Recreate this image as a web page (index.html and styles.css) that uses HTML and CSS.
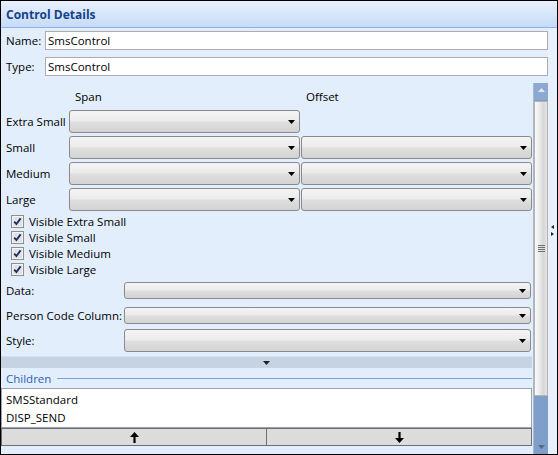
FILE: index.html
```html
<!DOCTYPE html>
<html>
<head>
<meta charset="utf-8">
<link rel="stylesheet" href="styles.css">
</head>
<body>
<div class="window">
  <div class="header"><span class="title">Control Details</span></div>
  <div class="body">
    <div class="panel">
      <div class="field-row first">
        <span class="field-label">Name:</span>
        <div class="textbox">SmsControl</div>
      </div>
      <div class="field-row">
        <span class="field-label">Type:</span>
        <div class="textbox">SmsControl</div>
      </div>
      <div class="main">
        <div class="content">
          <div class="span-head">
            <span></span>
            <span class="col-span">Span</span>
            <span class="col-offset">Offset</span>
          </div>
          <div class="span-grid">
            <span class="row-label">Extra Small</span>
            <div class="combo"><svg class="arrow" width="7" height="4" viewBox="0 0 7 4"><polygon points="0,0 7,0 3.5,4"/></svg></div>
            <span></span>
            <span class="row-label">Small</span>
            <div class="combo"><svg class="arrow" width="7" height="4" viewBox="0 0 7 4"><polygon points="0,0 7,0 3.5,4"/></svg></div>
            <div class="combo"><svg class="arrow" width="7" height="4" viewBox="0 0 7 4"><polygon points="0,0 7,0 3.5,4"/></svg></div>
            <span class="row-label">Medium</span>
            <div class="combo"><svg class="arrow" width="7" height="4" viewBox="0 0 7 4"><polygon points="0,0 7,0 3.5,4"/></svg></div>
            <div class="combo"><svg class="arrow" width="7" height="4" viewBox="0 0 7 4"><polygon points="0,0 7,0 3.5,4"/></svg></div>
            <span class="row-label">Large</span>
            <div class="combo"><svg class="arrow" width="7" height="4" viewBox="0 0 7 4"><polygon points="0,0 7,0 3.5,4"/></svg></div>
            <div class="combo"><svg class="arrow" width="7" height="4" viewBox="0 0 7 4"><polygon points="0,0 7,0 3.5,4"/></svg></div>
          </div>
          <div class="checks">
            <div class="check"><svg class="cb" width="13" height="13" viewBox="0 0 13 13"><rect x="0.5" y="0.5" width="12" height="12" fill="#f4f4f4" stroke="#8e8f8f"/><rect x="2" y="2" width="9" height="9" fill="#dfe3e8"/><path d="M3.2 6.6 L5.4 9 L9.6 3.4" fill="none" stroke="#1d2d5c" stroke-width="1.8"/></svg><span>Visible Extra Small</span></div>
            <div class="check"><svg class="cb" width="13" height="13" viewBox="0 0 13 13"><rect x="0.5" y="0.5" width="12" height="12" fill="#f4f4f4" stroke="#8e8f8f"/><rect x="2" y="2" width="9" height="9" fill="#dfe3e8"/><path d="M3.2 6.6 L5.4 9 L9.6 3.4" fill="none" stroke="#1d2d5c" stroke-width="1.8"/></svg><span>Visible Small</span></div>
            <div class="check"><svg class="cb" width="13" height="13" viewBox="0 0 13 13"><rect x="0.5" y="0.5" width="12" height="12" fill="#f4f4f4" stroke="#8e8f8f"/><rect x="2" y="2" width="9" height="9" fill="#dfe3e8"/><path d="M3.2 6.6 L5.4 9 L9.6 3.4" fill="none" stroke="#1d2d5c" stroke-width="1.8"/></svg><span>Visible Medium</span></div>
            <div class="check"><svg class="cb" width="13" height="13" viewBox="0 0 13 13"><rect x="0.5" y="0.5" width="12" height="12" fill="#f4f4f4" stroke="#8e8f8f"/><rect x="2" y="2" width="9" height="9" fill="#dfe3e8"/><path d="M3.2 6.6 L5.4 9 L9.6 3.4" fill="none" stroke="#1d2d5c" stroke-width="1.8"/></svg><span>Visible Large</span></div>
          </div>
          <div class="prop-row data">
            <span class="prop-label">Data:</span>
            <div class="combo"><svg class="arrow" width="7" height="4" viewBox="0 0 7 4"><polygon points="0,0 7,0 3.5,4"/></svg></div>
          </div>
          <div class="prop-row person">
            <span class="prop-label">Person Code Column:</span>
            <div class="combo"><svg class="arrow" width="7" height="4" viewBox="0 0 7 4"><polygon points="0,0 7,0 3.5,4"/></svg></div>
          </div>
          <div class="prop-row style">
            <span class="prop-label">Style:</span>
            <div class="combo"><svg class="arrow" width="7" height="4" viewBox="0 0 7 4"><polygon points="0,0 7,0 3.5,4"/></svg></div>
          </div>
          <div class="collapse"><svg width="7" height="4" viewBox="0 0 7 4"><polygon points="0,0 7,0 3.5,4" fill="#222"/></svg></div>
          <div class="group-head"><span class="group-title">Children</span><span class="group-line"></span></div>
          <div class="list">
            <div class="list-item">SMSStandard</div>
            <div class="list-item">DISP_SEND</div>
          </div>
          <div class="move-buttons">
            <div class="move-btn"><svg width="9" height="11" viewBox="0 0 9 11"><polygon points="4.5,0 9,5 5.6,5 5.6,11 3.4,11 3.4,5 0,5" fill="#000"/></svg></div>
            <div class="move-btn"><svg width="9" height="11" viewBox="0 0 9 11"><polygon points="4.5,11 9,6 5.6,6 5.6,0 3.4,0 3.4,6 0,6" fill="#000"/></svg></div>
          </div>
        </div>
        <div class="scrollbar">
          <div class="sb-up"><svg width="7" height="4" viewBox="0 0 7 4"><polygon points="0,4 7,4 3.5,0" fill="#dfe7f3"/></svg></div>
          <div class="sb-thumb"><span class="grip"></span><span class="grip"></span><span class="grip"></span><span class="grip"></span></div>
          <div class="sb-track"><svg width="7" height="4" viewBox="0 0 7 4"><polygon points="0,0 7,0 3.5,4" fill="#55698a"/></svg></div>
        </div>
      </div>
    </div>
    <div class="splitter">
      <svg width="5" height="12" viewBox="0 0 5 12"><polygon points="4,0 4,4 1,2" fill="#222"/><polygon points="1,7 1,11 4,9" fill="#222"/></svg>
    </div>
  </div>
</div>
</body>
</html>
```

FILE: styles.css
```css
* { box-sizing: border-box; }
html, body { margin: 0; padding: 0; }
body {
  font-family: "Open Sans", "Noto Sans", sans-serif;
  font-size: 11.5px;
  color: #000;
  background: #fff;
}
.window {
  width: 558px;
  height: 455px;
  border: 1px solid #000;
  background: #e3eefc;
  display: flex;
  flex-direction: column;
  overflow: hidden;
}
.header {
  height: 27px;
  flex: none;
  background: linear-gradient(#e8f1fc, #c6dbf7);
  border-bottom: 1px solid #8fb2e2;
  padding-left: 5px;
  display: flex;
  align-items: center;
}
.title {
  font-weight: bold;
  font-size: 12px;
  color: #15428b;
}
.body {
  flex: 1;
  display: flex;
  min-height: 0;
}
.panel {
  flex: 1;
  display: flex;
  flex-direction: column;
  min-width: 0;
}
.splitter {
  width: 9px;
  flex: none;
  background: #e8f0fc;
  display: flex;
  justify-content: center;
  align-items: flex-start;
  padding-top: 197px;
}
.field-row {
  display: flex;
  align-items: center;
  height: 19px;
  margin-top: 7px;
}
.field-row.first { margin-top: 3px; }
.field-label {
  width: 44px;
  padding-left: 5px;
  flex: none;
}
.textbox {
  flex: 1;
  height: 19px;
  background: #fff;
  border: 1px solid #abadb3;
  padding-left: 2px;
  line-height: 17px;
}
.main {
  flex: 1;
  display: flex;
  margin-top: 7px;
  min-height: 0;
}
.content {
  width: 531px;
  margin-right: 1px;
  display: flex;
  flex-direction: column;
}
.span-head {
  display: grid;
  grid-template-columns: 67px 231px 231px;
  column-gap: 1px;
  height: 27px;
  padding-top: 6px;
  line-height: 15px;
}
.col-span { padding-left: 6px; }
.col-offset { padding-left: 5px; }
.span-grid {
  display: grid;
  grid-template-columns: 67px 231px 231px;
  column-gap: 1px;
  row-gap: 3px;
  grid-auto-rows: 23px;
}
.row-label {
  padding-left: 5px;
  align-self: center;
}
.combo {
  border: 1px solid #8a8a8a;
  border-radius: 3px;
  background: linear-gradient(#f4f4f4 0%, #ececec 45%, #dedede 55%, #d3d3d3 100%);
  display: flex;
  align-items: center;
  justify-content: flex-end;
  padding-right: 4px;
}
.arrow { fill: #000; }
.checks {
  margin-top: 2px;
  padding-left: 10px;
}
.check {
  height: 16px;
  display: flex;
  align-items: center;
  gap: 5px;
}
.cb { flex: none; }
.prop-row {
  display: grid;
  grid-template-columns: 123px 407px;
}
.prop-label {
  padding-left: 5px;
  align-self: center;
}
.prop-row.data { height: 17px; margin-top: 5px; }
.prop-row.person { height: 17px; margin-top: 8px; }
.prop-row.style { height: 23px; margin-top: 5px; }
.collapse {
  margin-top: 4px;
  height: 12px;
  background: #c6d3e3;
  border-top: 1px solid #d3dfee;
  display: flex;
  justify-content: center;
  align-items: center;
}
.group-head {
  height: 20px;
  display: flex;
  align-items: center;
}
.group-title {
  padding-left: 5px;
  color: #2a64b5;
}
.group-line {
  flex: 1;
  height: 1px;
  background: #7ba4da;
  margin-left: 6px;
}
.list {
  height: 40px;
  background: #fff;
  border: 1px solid #9aa3ad;
  padding-top: 2px;
}
.list-item {
  line-height: 18px;
  padding-left: 4px;
}
.move-buttons {
  display: grid;
  grid-template-columns: 266px 265px;
  height: 18px;
}
.move-btn {
  background: #dcdcdc;
  border: 1px solid #6f6f6f;
  display: flex;
  justify-content: center;
  align-items: center;
}
.move-btn + .move-btn { border-left: none; }
.scrollbar {
  width: 15px;
  flex: none;
  display: flex;
  flex-direction: column;
  background: #7f9ec9;
  border-left: 1px solid #a7b8cf;
}
.sb-up {
  height: 17px;
  background: #8da9d2;
  display: flex;
  justify-content: center;
  align-items: center;
  padding-bottom: 4px;
}
.sb-thumb {
  height: 295px;
  margin: 1px 0 0 0;
  border: 1px solid #b3b3b3;
  background: linear-gradient(to right, #fbfbfb, #ececec 35%, #d8d8d8 70%, #e4e4e4);
  display: flex;
  flex-direction: column;
  justify-content: center;
  align-items: center;
  gap: 1px;
}
.grip {
  width: 7px;
  height: 1px;
  background: #6f6f6f;
}
.sb-track {
  flex: 1;
  display: flex;
  justify-content: center;
  align-items: flex-end;
  padding-bottom: 5px;
}
```
